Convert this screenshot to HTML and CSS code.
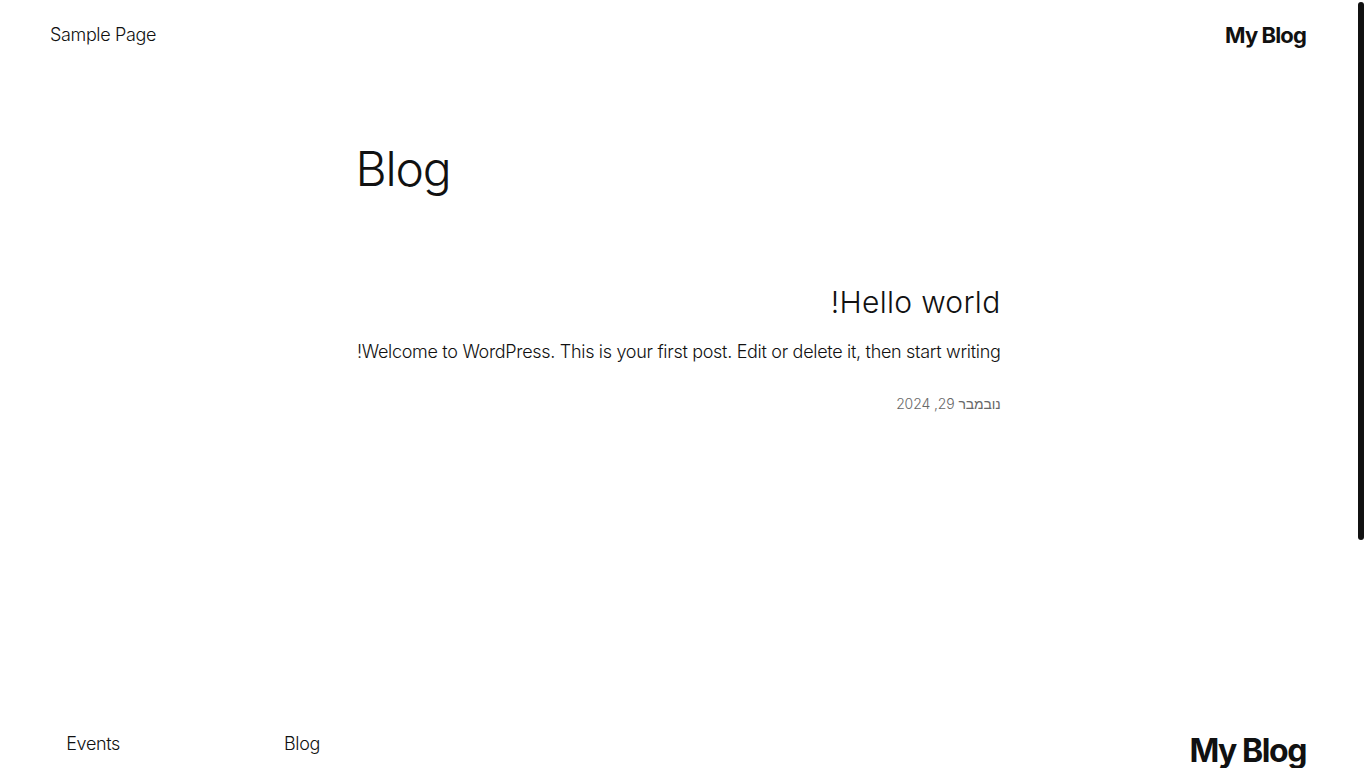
FILE: index.html
```html
<!DOCTYPE html>
<html lang="he" dir="rtl">
<head>
<meta charset="utf-8">
<title>My Blog</title>
<link rel="stylesheet" href="styles.css">
</head>
<body>
<div class="scroll-thumb" aria-hidden="true"></div>
<header class="site-header">
  <a class="site-title" href="#">My Blog</a>
  <nav class="header-nav"><a href="#">Sample Page</a></nav>
</header>
<main class="site-main">
  <h1 class="page-title">Blog</h1>
  <article class="post">
    <h2 class="post-title"><a href="#">Hello world!</a></h2>
    <p class="post-excerpt">Welcome to WordPress. This is your first post. Edit or delete it, then start writing!</p>
    <time class="post-date">נובמבר 29, 2024</time>
  </article>
</main>
<footer class="site-footer">
  <div class="footer-top">
    <a class="footer-title" href="#">My Blog</a>
    <div class="footer-navs">
      <ul class="footer-col">
        <li><a href="#">Blog</a></li>
        <li><a href="#">About</a></li>
        <li><a href="#">FAQs</a></li>
        <li><a href="#">Authors</a></li>
      </ul>
      <ul class="footer-col">
        <li><a href="#">Events</a></li>
        <li><a href="#">Shop</a></li>
        <li><a href="#">Patterns</a></li>
        <li><a href="#">Themes</a></li>
      </ul>
    </div>
  </div>
  <div class="footer-bottom">
    <span>Twenty Twenty-Five</span>
    <span>Designed with <a href="#">WordPress</a></span>
  </div>
</footer>
</body>
</html>
```

FILE: styles.css
```css
html {
  background: #fff;
}
body {
  margin: 0 10px 0 0;
  font-family: Inter, "Noto Sans", "Noto Sans CJK SC", sans-serif;
  font-weight: 300;
  color: #111111;
  font-size: 18px;
  line-height: 1.6;
}
a {
  color: inherit;
  text-decoration: none;
}
.scroll-thumb {
  position: fixed;
  top: 2px;
  right: 2px;
  width: 6px;
  height: 538px;
  border-radius: 3px;
  background: #111;
}
.site-header {
  display: flex;
  justify-content: space-between;
  align-items: center;
  padding: 21px 50px 0;
}
.site-title {
  font-size: 22px;
  line-height: 1.3;
  font-weight: 650;
  letter-spacing: -0.04em;
}
.header-nav {
  font-size: 18px;
  line-height: 1.6;
  letter-spacing: -0.02em;
}
.site-main {
  width: 645px;
  margin: 0 auto;
}
.page-title {
  margin: 90px 0 0;
  font-size: 48px;
  line-height: 1.2;
  font-weight: 300;
  text-align: left;
  letter-spacing: -0.025em;
}
.post {
  margin-top: 87px;
}
.post-title {
  margin: 0;
  font-size: 30px;
  line-height: 1.2;
  font-weight: 300;
  letter-spacing: 0.01em;
}
.post-excerpt {
  margin: 17.6px 0 0;
  font-size: 18px;
  line-height: 1.6;
  letter-spacing: -0.017em;
}
.post-date {
  display: block;
  margin-top: 26px;
  font-size: 14px;
  line-height: 1.6;
  color: #686868;
  letter-spacing: -0.01em;
}
.site-footer {
  margin-top: 312px;
  padding: 0 50px 40px;
  min-height: 350px;
  display: flex;
  flex-direction: column;
  justify-content: space-between;
  box-sizing: border-box;
}
.footer-top {
  display: flex;
  justify-content: space-between;
  align-items: flex-start;
}
.footer-title {
  margin-top: 5px;
  font-size: 32px;
  line-height: 1.2;
  font-weight: 650;
  letter-spacing: -0.045em;
}
.footer-navs {
  display: flex;
  gap: 130px;
  margin-top: 3px;
}
.footer-col {
  list-style: none;
  margin: 0;
  padding: 0;
  width: 70px;
  display: flex;
  flex-direction: column;
  gap: 8px;
  font-size: 18px;
  line-height: 1.6;
  letter-spacing: -0.02em;
}
.footer-bottom {
  display: flex;
  justify-content: space-between;
  font-size: 14px;
  color: #111;
}
```
